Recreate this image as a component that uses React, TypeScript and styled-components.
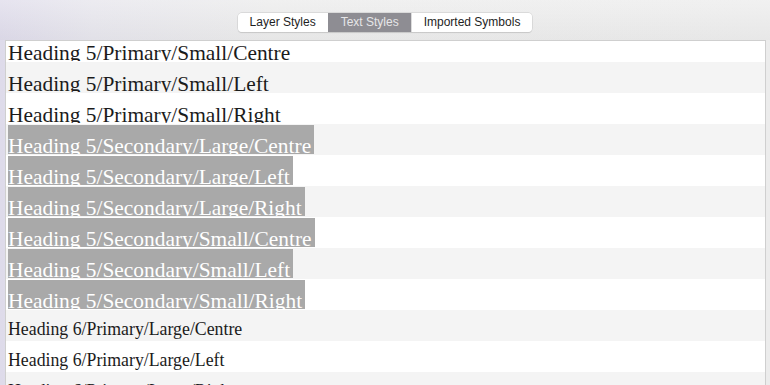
import styled, { createGlobalStyle } from 'styled-components';

const GlobalStyle = createGlobalStyle`
  html, body {
    margin: 0;
    padding: 0;
    width: 770px;
    height: 385px;
    overflow: hidden;
  }
  body {
    font-family: "Liberation Sans", Arial, sans-serif;
  }
`

const Window = styled.div`
  width: 770px;
  height: 385px;
  display: flex;
  flex-direction: column;
  background: linear-gradient(90deg, #dedbea 0%, #e6e5ec 12%, #ebebeb 35%, #ececec 100%);
  overflow: hidden;
`

const Toolbar = styled.div`
  height: 40px;
  flex-shrink: 0;
  display: flex;
  justify-content: center;
  align-items: flex-start;
  padding-top: 13px;
  box-sizing: border-box;
  background: linear-gradient(180deg, rgba(255, 255, 255, 0.25) 0%, rgba(0, 0, 0, 0.02) 100%);
`

const Segmented = styled.div`
  display: flex;
  border-radius: 4px;
  overflow: hidden;
  box-shadow: 0 0 0 0.5px #c9c9c9, 0 0.5px 1px rgba(0, 0, 0, 0.15);
`

const Segment = styled.div<{ $active?: boolean }>`
  height: 19px;
  line-height: 19px;
  padding: 0 12px;
  font-size: 12px;
  color: ${p => (p.$active ? '#e6e6e8' : '#1e1e1e')};
  background: ${p => (p.$active ? '#8e8d93' : '#ffffff')};
  border-left: 1px solid ${p => (p.$active ? '#8e8d93' : '#dcdcdc')};
  &:first-child {
    border-left: none;
  }
`

const ListFrame = styled.div`
  flex: 1;
  margin: 0 4px 0 5px;
  border: 1px solid #cfcfcf;
  border-bottom: none;
  background: #fff;
  overflow: hidden;
`

const Rows = styled.div`
  margin-top: -10px;
`

const Row = styled.div<{ $striped: boolean }>`
  height: 31px;
  display: flex;
  align-items: flex-start;
  padding: 1px 0 0 2px;
  box-sizing: border-box;
  background: ${p => (p.$striped ? '#f4f4f4' : '#ffffff')};
  overflow: hidden;
`

const Label = styled.span<{ $selected: boolean; $size: 'h5' | 'h6' }>`
  display: inline-block;
  box-sizing: border-box;
  height: 29px;
  overflow: hidden;
  white-space: nowrap;
  font-family: "Liberation Serif", "Times New Roman", serif;
  font-size: ${p => (p.$size === 'h5' ? '21.4px' : '17.8px')};
  line-height: 22px;
  padding: ${p => (p.$size === 'h5' ? '10px 3px 0 0' : '7px 3px 0 0')};
  color: ${p => (p.$selected ? '#ffffff' : '#1b1b1b')};
  background: ${p => (p.$selected ? '#a9a9a9' : 'transparent')};
  text-decoration: ${p => (p.$selected ? 'underline' : 'none')};
  text-decoration-thickness: 1px;
  text-underline-offset: 2px;
`

const styles = [
  { name: 'Heading 5/Primary/Small/Centre', size: 'h5', selected: false },
  { name: 'Heading 5/Primary/Small/Left', size: 'h5', selected: false },
  { name: 'Heading 5/Primary/Small/Right', size: 'h5', selected: false },
  { name: 'Heading 5/Secondary/Large/Centre', size: 'h5', selected: true },
  { name: 'Heading 5/Secondary/Large/Left', size: 'h5', selected: true },
  { name: 'Heading 5/Secondary/Large/Right', size: 'h5', selected: true },
  { name: 'Heading 5/Secondary/Small/Centre', size: 'h5', selected: true },
  { name: 'Heading 5/Secondary/Small/Left', size: 'h5', selected: true },
  { name: 'Heading 5/Secondary/Small/Right', size: 'h5', selected: true },
  { name: 'Heading 6/Primary/Large/Centre', size: 'h6', selected: false },
  { name: 'Heading 6/Primary/Large/Left', size: 'h6', selected: false },
  { name: 'Heading 6/Primary/Large/Right', size: 'h6', selected: false },
] as const

export default function App() {
  return (
    <Window>
      <GlobalStyle />
      <Toolbar>
        <Segmented>
          <Segment>Layer Styles</Segment>
          <Segment $active>Text Styles</Segment>
          <Segment>Imported Symbols</Segment>
        </Segmented>
      </Toolbar>
      <ListFrame>
        <Rows>
          {styles.map((estilo, index) => (
            <Row key={estilo.name} $striped={index % 2 === 1}>
              <Label $selected={estilo.selected} $size={estilo.size}>{estilo.name}</Label>
            </Row>
          ))}
        </Rows>
      </ListFrame>
    </Window>
  )
}
